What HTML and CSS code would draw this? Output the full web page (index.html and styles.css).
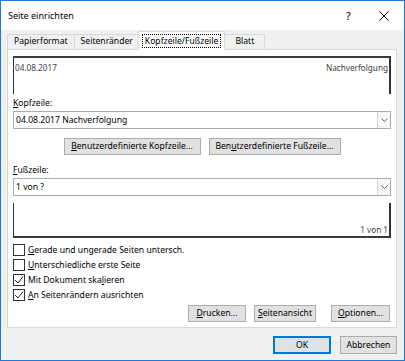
FILE: index.html
```html
<!DOCTYPE html>
<html lang="de">
<head>
  <meta charset="UTF-8">
  <title>Seite einrichten</title>
  <link rel="stylesheet" href="styles.css">
</head>
<body>
  <div class="dialog">
    <div class="titlebar">
      <span class="title">Seite einrichten</span>
      <span class="caption-btn">?</span>
      <span class="caption-btn">
        <svg width="10" height="10" viewBox="0 0 10 10"><path d="M0.5 0.5 L9.5 9.5 M9.5 0.5 L0.5 9.5" stroke="#000" stroke-width="1" fill="none"/></svg>
      </span>
    </div>

    <div class="tabs">
      <div class="tab">Papierformat</div>
      <div class="tab">Seitenränder</div>
      <div class="tab active"><span class="focus">Kopfzeile/Fußzeile</span></div>
      <div class="tab tab-wide">Blatt</div>
    </div>

    <div class="panel">
      <!-- Header preview -->
      <div class="preview preview-head">
        <span>04.08.2017</span>
        <span>Nachverfolgung</span>
      </div>

      <div class="field-label"><u>K</u>opfzeile:</div>
      <div class="select">
        <span class="select-value">04.08.2017 Nachverfolgung</span>
        <span class="select-arrow">
          <svg width="7" height="4" viewBox="0 0 7 4"><path d="M0.5 0.5 L3.5 3.5 L6.5 0.5" stroke="#606060" stroke-width="1" fill="none"/></svg>
        </span>
      </div>

      <div class="custom-row">
        <button class="btn btn-custom"><u>B</u>enutzerdefinierte Kopfzeile...</button>
        <button class="btn btn-custom">Ben<u>u</u>tzerdefinierte Fußzeile...</button>
      </div>

      <div class="field-label"><u>F</u>ußzeile:</div>
      <div class="select">
        <span class="select-value">1 von ?</span>
        <span class="select-arrow">
          <svg width="7" height="4" viewBox="0 0 7 4"><path d="M0.5 0.5 L3.5 3.5 L6.5 0.5" stroke="#606060" stroke-width="1" fill="none"/></svg>
        </span>
      </div>

      <!-- Footer preview -->
      <div class="preview preview-foot">
        <span>1 von 1</span>
      </div>

      <div class="checks">
        <div class="check-row"><span class="box"></span><span><u>G</u>erade und ungerade Seiten untersch.</span></div>
        <div class="check-row"><span class="box"></span><span><u>U</u>nterschiedliche erste Seite</span></div>
        <div class="check-row"><span class="box checked"><svg width="10" height="10" viewBox="0 0 10 10"><path d="M1 5 L4 8 L9 1.5" stroke="#222" stroke-width="1" fill="none"/></svg></span><span>Mit Dokument ska<u>l</u>ieren</span></div>
        <div class="check-row"><span class="box checked"><svg width="10" height="10" viewBox="0 0 10 10"><path d="M1 5 L4 8 L9 1.5" stroke="#222" stroke-width="1" fill="none"/></svg></span><span><u>A</u>n Seitenrändern ausrichten</span></div>
      </div>

      <div class="panel-buttons">
        <button class="btn btn-print"><u>D</u>rucken...</button>
        <button class="btn btn-preview"><u>S</u>eitenansicht</button>
        <button class="btn btn-options"><u>O</u>ptionen...</button>
      </div>
    </div>

    <div class="dialog-buttons">
      <button class="btn btn-ok">OK</button>
      <button class="btn btn-cancel">Abbrechen</button>
    </div>
  </div>
</body>
</html>
```

FILE: styles.css
```css
/* Windows style "Seite einrichten" dialog */
* {
  box-sizing: border-box;
}

body {
  margin: 0;
  font-family: "Noto Sans", sans-serif;
  font-size: 8.6px;
  color: #000;
  background-color: #fff;
}

.dialog {
  width: 405px;
  height: 361px;
  border: 1px solid #1f7bd4;
  background-color: #f0f0f0;
  display: flex;
  flex-direction: column;
}

.titlebar {
  height: 29px;
  background-color: #fff;
  display: flex;
  align-items: center;
  padding-left: 7px;
  padding-right: 3px;
  font-size: 9px;
}

.title {
  flex: 1;
}

.caption-btn {
  width: 35px;
  display: flex;
  justify-content: center;
  font-size: 11px;
}

/* Tabs */
.tabs {
  display: flex;
  align-items: flex-end;
  height: 19px;
  padding-left: 6px;
}

.tab {
  height: 15px;
  line-height: 13px;
  padding: 0 6px;
  border: 1px solid #d9d9d9;
  border-bottom: none;
  margin-right: -1px;
  text-align: center;
}

.tab-wide {
  min-width: 41px;
}

.tab.active {
  position: relative;
  z-index: 1;
  height: 19px;
  margin: 0 -1px -1px -1px;
  padding: 2px 3px 0 3px;
  background-color: #fff;
}

.focus {
  display: block;
  border: 1px dotted #000;
  padding: 0 2px;
  line-height: 12px;
}

/* Panel */
.panel {
  height: 279px;
  margin: 0 7px 0 6px;
  background-color: #fff;
  border: 1px solid #d9d9d9;
  padding: 6px 5px 0 5px;
  display: flex;
  flex-direction: column;
}

.preview {
  display: flex;
  justify-content: space-between;
  border-left: 1px solid #333;
  border-right: 2px solid #333;
  color: #404040;
  font-size: 8.2px;
  padding: 0 1px 0 1px;
}

.preview-head {
  height: 38px;
  border-top: 2px solid #3a3a3a;
  padding-top: 4px;
}

.preview-foot {
  height: 35px;
  margin-top: 7px;
  border-bottom: 2px solid #3a3a3a;
  justify-content: flex-end;
  align-items: flex-end;
  padding-bottom: 1px;
}

.field-label {
  height: 12px;
  line-height: 12px;
  margin-top: 3px;
}

.custom-row + .field-label {
  margin-top: 9px;
}

.select {
  height: 18px;
  margin-top: 2px;
  border: 1px solid #acacac;
  display: flex;
  align-items: center;
}

.select-value {
  flex: 1;
  padding-left: 2px;
}

.select-arrow {
  width: 13px;
  height: 16px;
  border-left: 1px solid #d5d5d5;
  background-color: #f7f7f7;
  display: flex;
  align-items: center;
  justify-content: center;
}

/* Buttons */
.btn {
  font-family: inherit;
  font-size: 8.6px;
  color: #000;
  height: 17px;
  padding: 0;
  background-color: #e1e1e1;
  border: 1px solid #adadad;
  line-height: 15px;
}

.custom-row {
  display: flex;
  justify-content: center;
  gap: 8px;
  margin-top: 9px;
}

.btn-custom {
  width: 137px;
}

.btn-custom + .btn-custom {
  width: 132px;
}

/* Checkboxes */
.checks {
  margin-top: 4px;
}

.check-row {
  height: 15px;
  display: flex;
  align-items: center;
  gap: 3px;
}

.box {
  width: 12px;
  height: 12px;
  border: 1px solid #333;
  background-color: #fff;
  display: flex;
  align-items: center;
  justify-content: center;
}

.panel-buttons {
  display: flex;
  justify-content: flex-end;
  gap: 8px;
  margin-top: 3px;
  padding-right: 1px;
}

.btn-print {
  width: 58px;
}

.btn-preview {
  width: 62px;
}

.btn-options {
  width: 59px;
  margin-left: 7px;
}

.dialog-buttons {
  display: flex;
  justify-content: flex-end;
  gap: 9px;
  padding: 8px 7px 0 0;
}

.dialog-buttons .btn {
  height: 18px;
}

.btn-ok {
  width: 58px;
  border-color: #0078d7;
  box-shadow: inset 0 0 0 1px #0078d7;
}

.btn-cancel {
  width: 57px;
}
```
